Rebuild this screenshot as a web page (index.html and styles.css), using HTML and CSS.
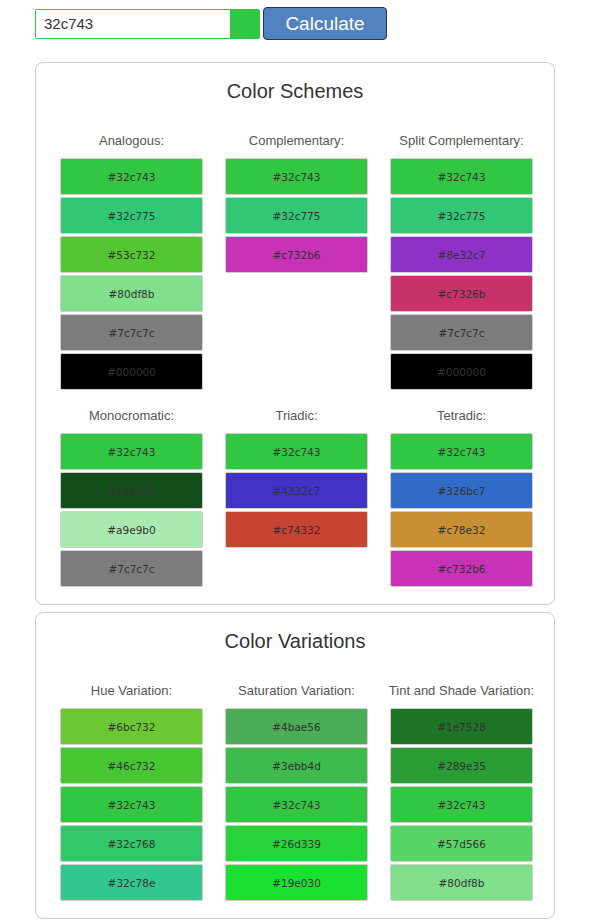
FILE: index.html
```html
<!DOCTYPE html>
<html>
<head>
<meta charset="utf-8">
<link rel="stylesheet" href="styles.css">
</head>
<body>
<div class="page">
  <div class="form-row">
    <div class="input-wrap">
      <input class="hex-input" type="text" value="32c743">
      <div class="input-swatch"></div>
    </div>
    <button class="calc-btn">Calculate</button>
  </div>

  <section class="card">
    <h2 class="card-title">Color Schemes</h2>
    <div class="grid">
      <div class="col">
        <div class="label">Analogous:</div>
        <div class="sw" style="background:#32c743">#32c743</div>
        <div class="sw" style="background:#32c775">#32c775</div>
        <div class="sw" style="background:#53c732">#53c732</div>
        <div class="sw" style="background:#80df8b">#80df8b</div>
        <div class="sw" style="background:#7c7c7c">#7c7c7c</div>
        <div class="sw" style="background:#000000">#000000</div>
      </div>
      <div class="col">
        <div class="label">Complementary:</div>
        <div class="sw" style="background:#32c743">#32c743</div>
        <div class="sw" style="background:#32c775">#32c775</div>
        <div class="sw" style="background:#c732b6">#c732b6</div>
      </div>
      <div class="col">
        <div class="label">Split Complementary:</div>
        <div class="sw" style="background:#32c743">#32c743</div>
        <div class="sw" style="background:#32c775">#32c775</div>
        <div class="sw" style="background:#8e32c7">#8e32c7</div>
        <div class="sw" style="background:#c7326b">#c7326b</div>
        <div class="sw" style="background:#7c7c7c">#7c7c7c</div>
        <div class="sw" style="background:#000000">#000000</div>
      </div>
      <div class="col">
        <div class="label">Monocromatic:</div>
        <div class="sw" style="background:#32c743">#32c743</div>
        <div class="sw" style="background:#134d1a">#134d1a</div>
        <div class="sw" style="background:#a9e9b0">#a9e9b0</div>
        <div class="sw" style="background:#7c7c7c">#7c7c7c</div>
      </div>
      <div class="col">
        <div class="label">Triadic:</div>
        <div class="sw" style="background:#32c743">#32c743</div>
        <div class="sw" style="background:#4332c7">#4332c7</div>
        <div class="sw" style="background:#c74332">#c74332</div>
      </div>
      <div class="col">
        <div class="label">Tetradic:</div>
        <div class="sw" style="background:#32c743">#32c743</div>
        <div class="sw" style="background:#326bc7">#326bc7</div>
        <div class="sw" style="background:#c78e32">#c78e32</div>
        <div class="sw" style="background:#c732b6">#c732b6</div>
      </div>
    </div>
  </section>

  <section class="card">
    <h2 class="card-title">Color Variations</h2>
    <div class="grid">
      <div class="col">
        <div class="label">Hue Variation:</div>
        <div class="sw" style="background:#6bc732">#6bc732</div>
        <div class="sw" style="background:#46c732">#46c732</div>
        <div class="sw" style="background:#32c743">#32c743</div>
        <div class="sw" style="background:#32c768">#32c768</div>
        <div class="sw" style="background:#32c78e">#32c78e</div>
      </div>
      <div class="col">
        <div class="label">Saturation Variation:</div>
        <div class="sw" style="background:#4bae56">#4bae56</div>
        <div class="sw" style="background:#3ebb4d">#3ebb4d</div>
        <div class="sw" style="background:#32c743">#32c743</div>
        <div class="sw" style="background:#26d339">#26d339</div>
        <div class="sw" style="background:#19e030">#19e030</div>
      </div>
      <div class="col">
        <div class="label">Tint and Shade Variation:</div>
        <div class="sw" style="background:#1e7528">#1e7528</div>
        <div class="sw" style="background:#289e35">#289e35</div>
        <div class="sw" style="background:#32c743">#32c743</div>
        <div class="sw" style="background:#57d566">#57d566</div>
        <div class="sw" style="background:#80df8b">#80df8b</div>
      </div>
    </div>
  </section>
</div>
</body>
</html>
```

FILE: styles.css
```css
html, body {
  margin: 0;
  padding: 0;
  background: #fff;
}

.page {
  padding: 7px 0 0 35px;
  width: 520px;
  font-family: "Liberation Sans", Arial, sans-serif;
}

.form-row {
  display: flex;
  align-items: center;
  gap: 3px;
  height: 33px;
  margin-bottom: 22px;
}

.input-wrap {
  display: flex;
  width: 223px;
  height: 28px;
  border: 1px solid #32c743;
  border-radius: 2px;
}

.hex-input {
  flex: 1;
  min-width: 0;
  border: 0;
  outline: none;
  padding: 0 0 0 8px;
  font-family: "Liberation Sans", Arial, sans-serif;
  font-size: 15px;
  color: #333;
  background: #fff;
}

.input-swatch {
  width: 29px;
  background: #32c743;
}

.calc-btn {
  width: 124px;
  height: 33px;
  padding: 0;
  background: #5283c0;
  border: 1px solid #2a3440;
  border-radius: 4px;
  color: #fff;
  font-family: "Liberation Sans", Arial, sans-serif;
  font-size: 19px;
}

.card {
  border: 1px solid #cccccc;
  border-radius: 8px;
  padding: 14px 0 17px 24px;
  margin-bottom: 7px;
}

.card-title {
  margin: 0 0 28px -24px;
  text-align: center;
  font-size: 20px;
  line-height: 28px;
  font-weight: normal;
  color: #333;
}

.grid {
  display: grid;
  grid-template-columns: repeat(3, 143px);
  column-gap: 22px;
  row-gap: 18px;
}

.col {
  display: flex;
  flex-direction: column;
  gap: 2px;
}

.label {
  text-align: center;
  white-space: nowrap;
  font-size: 13px;
  line-height: 16px;
  color: #555;
  margin-bottom: 7px;
  margin-left: -10px;
  margin-right: -10px;
}

.sw {
  height: 35px;
  border: 1px solid #cfcfcf;
  border-radius: 2px;
  display: flex;
  align-items: center;
  justify-content: center;
  font-family: "DejaVu Sans", Verdana, sans-serif;
  font-size: 10.5px;
  color: #333;
}
```
